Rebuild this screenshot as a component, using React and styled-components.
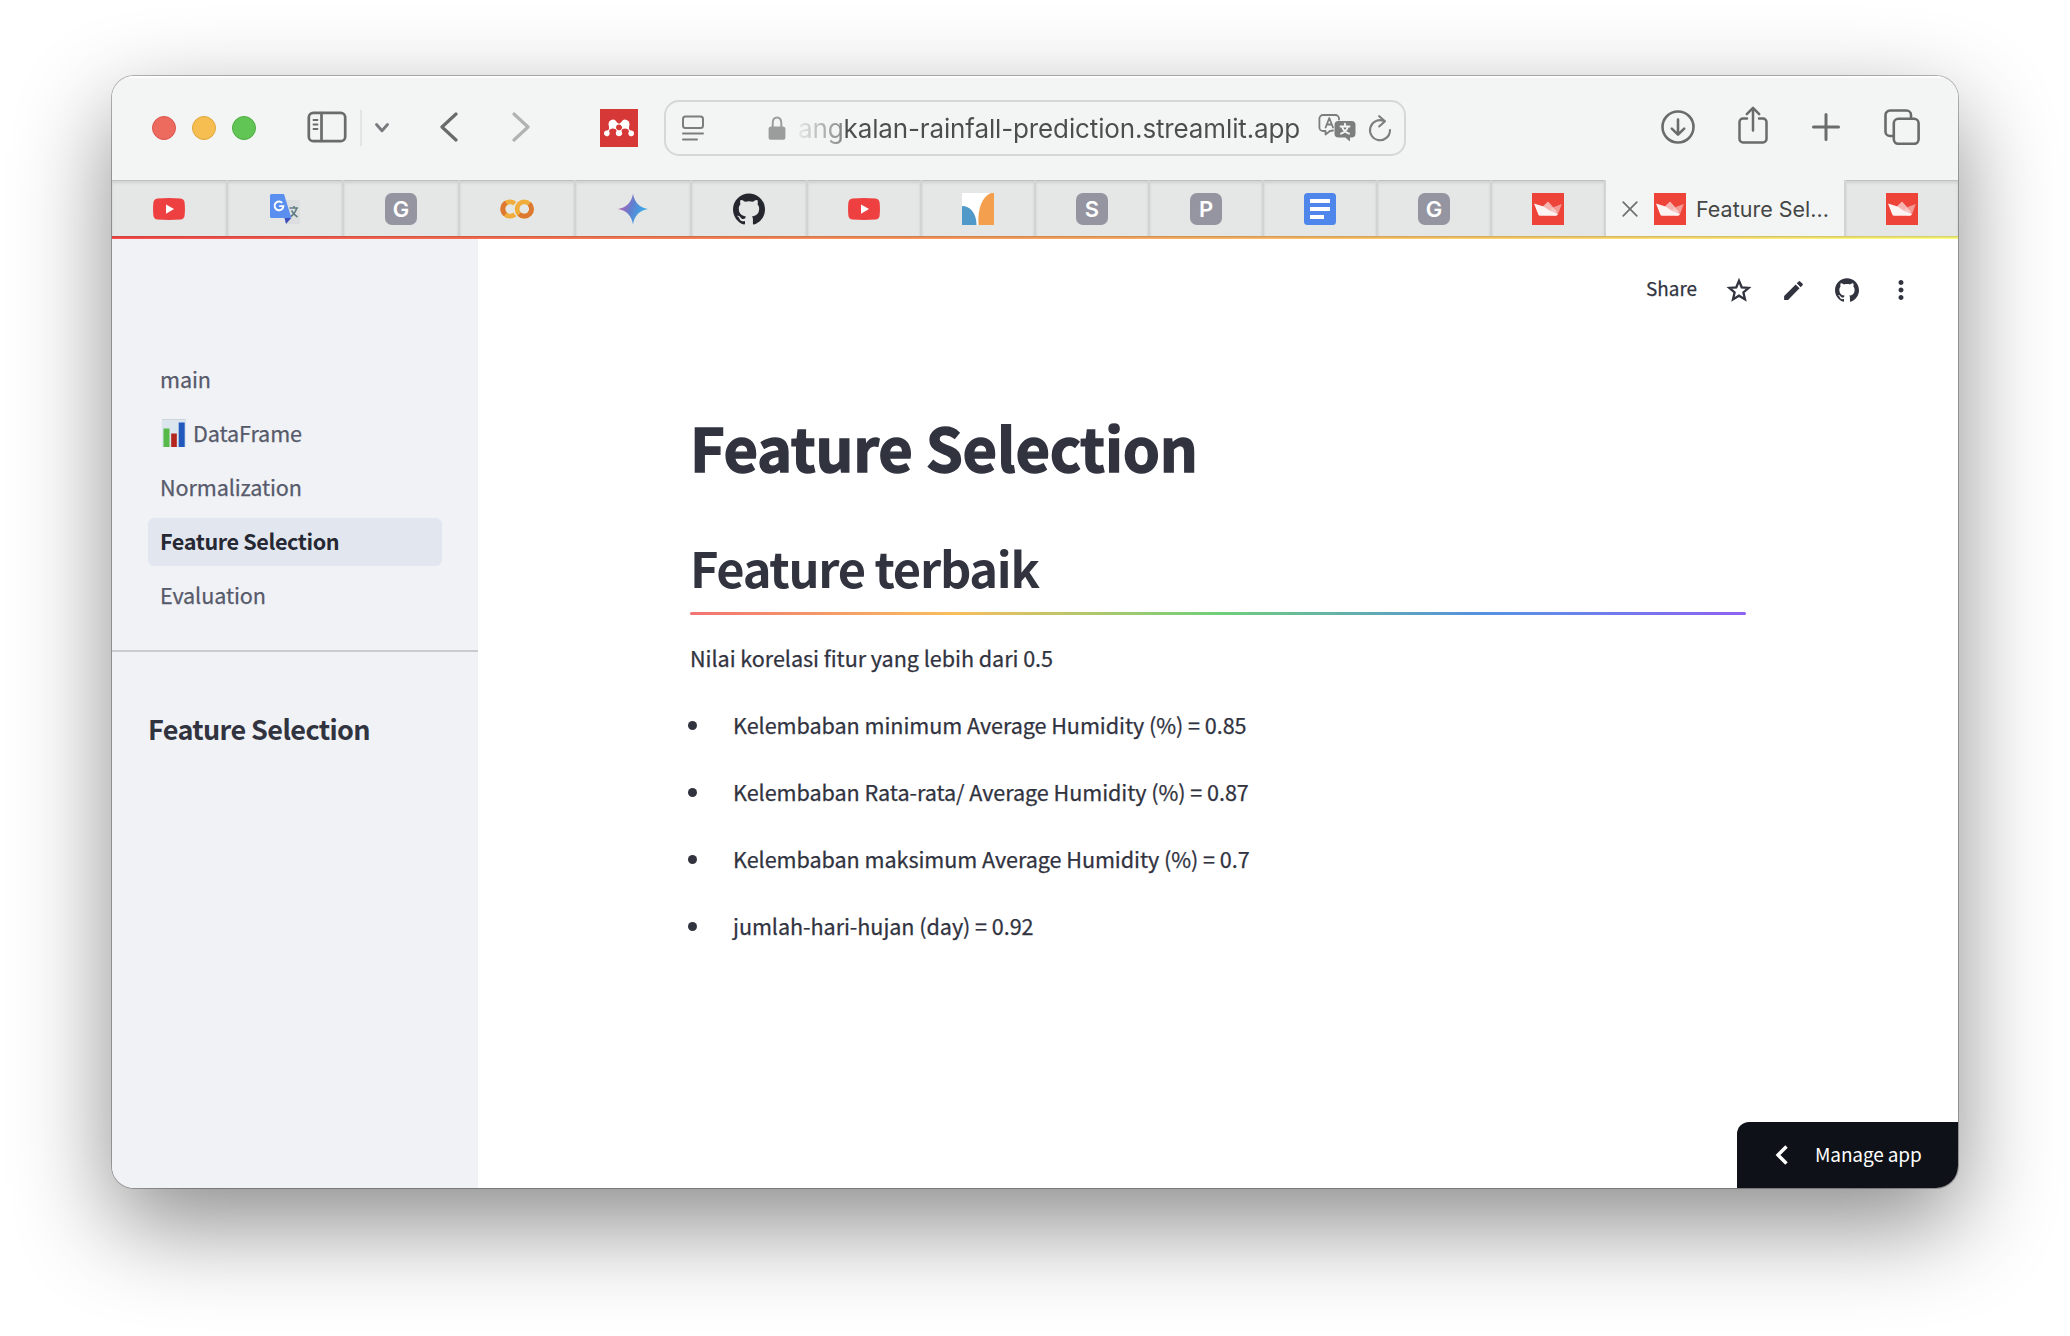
import React from "react";
import styled, { createGlobalStyle, css } from "styled-components";
import { SiGithub, SiMendeley } from "react-icons/si";
import { MdEdit, MdMoreVert } from "react-icons/md";

const PAGE_FONT = '"Noto Sans CJK SC", "Noto Sans", sans-serif';
const UI_FONT = 'Inter, "Liberation Sans", sans-serif';

const GlobalStyle = createGlobalStyle`
  *, *::before, *::after { box-sizing: border-box; }
  html, body { margin: 0; background: #fff; }
  svg { display: block; flex: none; }
`;

const Desktop = styled.div`
  width: 2070px;
  height: 1336px;
  padding: 76px 112px 148px;
  overflow: hidden;
  background: #fff;
`;

const Window = styled.div`
  height: 1112px;
  display: flex;
  flex-direction: column;
  border-radius: 22px;
  overflow: hidden;
  background: #fff;
  box-shadow: 0 0 0 1px rgba(0, 0, 0, 0.27), 0 36px 96px rgba(0, 0, 0, 0.46);
`;

const Toolbar = styled.header`
  height: 104px;
  flex: none;
  display: flex;
  align-items: center;
  background: #f3f5f4;
  color: #6a6b6b;
  box-shadow: inset 0 2px 1px rgba(255, 255, 255, 0.8);
`;

const Lights = styled.div`
  display: flex;
  gap: 16px;
  margin-left: 40px;
`;

const Light = styled.span`
  width: 24px;
  height: 24px;
  border-radius: 50%;
  background: ${(p) => p.$fill};
  border: 1px solid ${(p) => p.$edge};
`;

const ToolIcon = styled.span`
  display: flex;
  flex: none;
  margin-left: ${(p) => p.$gap}px;
  ${(p) => p.$lift && css`margin-bottom: ${p.$lift}px;`}
  color: ${(p) => p.$color || "inherit"};
`;

const Divider = styled.span`
  width: 2px;
  height: 36px;
  margin-left: 13px;
  background: #e3e5e4;
`;

const MendeleyBadge = styled.span`
  width: 38px;
  height: 38px;
  margin-left: 70px;
  display: flex;
  align-items: center;
  justify-content: center;
  background: #d63838;
  color: #fff;
`;

const AddressBar = styled.div`
  width: 742px;
  height: 56px;
  margin-left: 26px;
  padding: 0 12px 0 16px;
  display: flex;
  align-items: center;
  border: 2px solid #d6d8d7;
  border-radius: 15px;
  color: #7c7d7d;
`;

const Address = styled.span`
  width: 508px;
  margin-left: 12px;
  padding-top: 2px;
  white-space: nowrap;
  font: 400 26px/40px ${UI_FONT};
  letter-spacing: ${(p) => p.$track}px;
  color: transparent;
  background: linear-gradient(90deg, rgba(76, 77, 77, 0.08), rgba(76, 77, 77, 0.6) 42px, #4c4d4d 46px);
  background-clip: text;
  -webkit-background-clip: text;
`;

const TabStrip = styled.nav`
  height: 56px;
  flex: none;
  display: flex;
  background: #f3f5f4;
`;

const Tab = styled.div`
  width: ${(p) => p.$w}px;
  display: flex;
  align-items: center;
  justify-content: center;
  padding-top: 2px;
  background: #e5e7e6;
  border-right: 2px solid #d2d4d3;
  box-shadow: inset 0 1px 0 #bfc1c0, inset 0 3px 3px rgba(0, 0, 0, 0.09);
  &:last-child {
    border-right: 0;
    border-left: 2px solid #d2d4d3;
  }
`;

const ActiveTab = styled(Tab)`
  justify-content: flex-start;
  padding-left: 16px;
  background: #f3f5f4;
  border: 0;
  box-shadow: none;
`;

const TabTitle = styled.span`
  margin-left: 10px;
  font: 400 21.5px/30px ${UI_FONT};
  letter-spacing: ${(p) => p.$track}px;
  color: #454646;
  white-space: nowrap;
`;

const LetterBadge = styled.span`
  width: 32px;
  height: 32px;
  border-radius: 7px;
  background: #9595a2;
  color: #fff;
  font: 600 22px/33px ${UI_FONT};
  text-align: center;
`;

const AccentLine = styled.div`
  height: 3px;
  flex: none;
  background: linear-gradient(rgba(0, 0, 0, 0.16) 1px, transparent 2px),
    linear-gradient(90deg, #fa4b4b, #fba35f 50%, #fffd80);
`;

const Page = styled.div`
  flex: 1;
  display: flex;
  min-height: 0;
  font-family: ${PAGE_FONT};
  color: #31333f;
`;

const Sidebar = styled.aside`
  width: 366px;
  flex: none;
  background: #f0f2f6;
`;

const NavList = styled.ul`
  list-style: none;
  margin: 0;
  padding: 117px 36px 30px;
  display: flex;
  flex-direction: column;
  gap: 6px;
  border-bottom: 2px solid #cacbd1;
`;

const NavItem = styled.li`
  height: 48px;
  padding: 0 12px 2px;
  display: flex;
  align-items: center;
  border-radius: 6px;
  font-size: 21.6px;
  line-height: 46px;
  letter-spacing: ${(p) => (p.$active ? -0.38 : -0.1)}px;
  white-space: nowrap;
  color: ${(p) => (p.$active ? "#262834" : "#575a6b")};
  font-weight: ${(p) => (p.$active ? 700 : 400)};
  -webkit-text-stroke: ${(p) => (p.$active ? 0 : 0.25)}px currentColor;
  background: ${(p) => (p.$active ? "#e2e7ef" : "transparent")};
  svg { margin: 0 7px 0 2px; }
`;

const SidebarHeading = styled.h2`
  margin: 53px 0 0 36px;
  font-size: 27px;
  line-height: 48px;
  font-weight: 700;
  letter-spacing: ${(p) => p.$track}px;
  white-space: nowrap;
`;

const Main = styled.main`
  flex: 1;
  display: flex;
  flex-direction: column;
`;

const Actions = styled.div`
  height: 102px;
  padding: 0 45px 0 0;
  display: flex;
  align-items: center;
  justify-content: flex-end;
`;

const ShareLabel = styled.span`
  font-size: 18.9px;
  line-height: 30px;
  letter-spacing: ${(p) => p.$track}px;
  -webkit-text-stroke: 0.25px currentColor;
  margin: 0 28px 4px 0;
`;

const ActionIcon = styled.span`
  display: flex;
  margin-right: ${(p) => p.$after}px;
`;

const Content = styled.article`
  width: 1056px;
  margin: 60px 0 0 212px;
  white-space: nowrap;
`;

const Title = styled.h1`
  margin: 0;
  font-size: 59.5px;
  line-height: 90px;
  font-weight: 700;
  letter-spacing: ${(p) => p.$track}px;
  -webkit-text-stroke: 1.4px #31333f;
`;

const Subtitle = styled.h2`
  margin: 40px 0 0;
  font-size: 48.8px;
  line-height: 72px;
  font-weight: 700;
  letter-spacing: ${(p) => p.$track}px;
`;

const Rainbow = styled.div`
  height: 3px;
  margin-top: 9px;
  border-radius: 2px;
  background: linear-gradient(90deg, #f27373, #f8be5c 25%, #6fcf79 50%, #5590e0 75%, #5b8fe8 78%, #8d63f0 99%);
`;

const Paragraph = styled.p`
  margin: 24px 0 0;
  font-size: 21.6px;
  line-height: 38px;
  letter-spacing: ${(p) => p.$track}px;
  -webkit-text-stroke: 0.25px currentColor;
`;

const Features = styled.ul`
  list-style: none;
  margin: 29px 0 0;
  padding: 0;
  display: flex;
  flex-direction: column;
  gap: 29px;
`;

const Feature = styled.li`
  display: flex;
  align-items: center;
  font-size: 21.6px;
  line-height: 38px;
  letter-spacing: ${(p) => p.$track}px;
  -webkit-text-stroke: 0.25px currentColor;
  &::before {
    content: "";
    width: 9px;
    height: 9px;
    margin: 1px 36px 0 -2px;
    border-radius: 50%;
    background: #31333f;
  }
`;

const ManageButton = styled.button`
  width: 221px;
  height: 66px;
  margin: auto 0 0 auto;
  padding: 0 0 0 38px;
  display: flex;
  align-items: center;
  border: 0;
  border-radius: 12px 0 0 0;
  background: #0e1117;
  color: #fff;
  font: 400 19px/32px ${PAGE_FONT};
  letter-spacing: ${(p) => p.$track}px;
  white-space: nowrap;
  span { margin: 0 0 2px 27px; }
`;

const stroke = (width) => ({
  fill: "none",
  stroke: "currentColor",
  strokeWidth: width,
  strokeLinecap: "round",
  strokeLinejoin: "round",
});

const SidebarIcon = () => (
  <svg width="40" height="32" viewBox="0 0 40 32" {...stroke(2.7)}>
    <rect x="1.8" y="1.8" width="36.4" height="28.4" rx="4.5" />
    <path d="M14.5 2v28" />
    <path d="M6.5 9h4M6.5 13.5h4M6.5 18h4" strokeWidth="1.9" />
  </svg>
);

const ChevronDown = () => (
  <svg width="16" height="12" viewBox="0 0 16 12" {...stroke(2.9)}>
    <path d="M2.5 2.5 8 8.8l5.5-6.3" />
  </svg>
);

const Arrow = ({ flip }) => (
  <svg width="18" height="30" viewBox="0 0 18 30" {...stroke(3.2)}>
    <path d={flip ? "M2 2l14 13L2 28" : "M16 2 2 15l14 13"} />
  </svg>
);

const ReaderIcon = () => (
  <svg width="22" height="26" viewBox="0 0 22 26" {...stroke(2)}>
    <rect x="1" y="1.4" width="20" height="11.6" rx="2.5" />
    <path d="M1 18.5h20M1 24.4h14" />
  </svg>
);

const LockIcon = () => (
  <svg width="18" height="24" viewBox="0 0 18 24">
    <path d="M4.7 11V7.2C4.7 3.6 6.4 1.5 9 1.5s4.3 2.1 4.3 5.7V11" fill="none" stroke="#9b9d9c" strokeWidth="2" />
    <rect x="0.6" y="10.4" width="16.8" height="13.4" rx="2.6" fill="#9b9d9c" />
  </svg>
);

const TranslateIcon = () => (
  <svg width="38" height="28" viewBox="0 0 38 28" fill="none" strokeLinecap="round" strokeLinejoin="round">
    <path
      d="M15 16.5 12 17 7.5 20.5V17H5a3.6 3.6 0 0 1-3.6-3.6V4.6A3.6 3.6 0 0 1 5 1h12.4A3.6 3.6 0 0 1 21 4.6v1"
      stroke="#7c7d7d"
      strokeWidth="1.8"
    />
    <path d="M7.6 13.5 11.3 4l3.7 9.5M8.8 10.5h5" stroke="#7c7d7d" strokeWidth="1.8" />
    <path d="M20.5 7h13a4 4 0 0 1 4 4v8.5a4 4 0 0 1-4 4H32v4l-4.7-4h-6.800a4 4 0 0 1-4-4V11a4 4 0 0 1 4-4z" fill="#7c7d7d" />
    <path d="M27 9.800v2M22.500 12.500h9M29.800 13c-1 3-3.300 5.200-6.800 6.700M24.200 13c1 3 3.300 5.200 6.800 6.700" stroke="#f3f5f4" strokeWidth="1.900" />
  </svg>
);

const ReloadIcon = () => (
  <svg width="24" height="27" viewBox="0 0 24 27" {...stroke(2.1)}>
    <path d="M16 6A10 10 0 1 0 22 15" />
    <path d="M11.2 1.200l5.800 5-5.800 5.300" />
  </svg>
);

const DownloadIcon = () => (
  <svg width="34" height="34" viewBox="0 0 34 34" {...stroke(2.6)}>
    <circle cx="17" cy="17" r="15.5" />
    <path d="M17 9.500v14.800M10.800 18.600l6.200 6 6.200-6" />
  </svg>
);

const ShareIcon = () => (
  <svg width="30" height="38" viewBox="0 0 30 38" {...stroke(2.5)}>
    <path d="M9 12.500H5a3.500 3.500 0 0 0-3.500 3.500v17A3.500 3.500 0 0 0 5 36.500h20a3.500 3.500 0 0 0 3.500-3.500V16a3.500 3.500 0 0 0-3.500-3.500h-4" />
    <path d="M15 24.500V2M8.800 8.200 15 1.800l6.200 6.400" />
  </svg>
);

const PlusIcon = () => (
  <svg width="28" height="28" viewBox="0 0 28 28" {...stroke(3)}>
    <path d="M14 1.500v25M1.500 14h25" />
  </svg>
);

const TabsIcon = () => (
  <svg width="36" height="36" viewBox="0 0 36 36" {...stroke(2.6)}>
    <rect x="9.8" y="9.8" width="24.8" height="25" rx="4.5" />
    <path d="M9.500 27H6a4.500 4.500 0 0 1-4.500-4.500V6A4.500 4.500 0 0 1 6 1.500h16.500A4.500 4.500 0 0 1 27 6v3.500" />
  </svg>
);

const YoutubeIcon = () => (
  <svg width="32" height="32" viewBox="0 0 32 32">
    <path d="M4.500 5.400Q16 4.600 27.500 5.400 31.200 5.800 31.600 9.500q.7 6.500 0 13-.4 3.700-4.100 4.100-11.500.8-23 0Q.8 26.200.4 22.500q-.7-6.500 0-13Q.8 5.800 4.500 5.400z" fill="#ee4040" />
    <path d="M13 11.500v9.200l8-4.600z" fill="#fff" />
  </svg>
);

const GoogleTranslateIcon = () => (
  <svg width="32" height="32" viewBox="0 0 32 32">
    <path d="M13 7h16.500q1.500 0 1.500 1.500v21q0 1.500-1.500 1.500H18z" fill="#dcdedf" />
    <path d="M20.500 15h8.500M25 13v2M27.500 15.500c-1 4-3.500 6.500-6.500 8.500M22.500 17.500c1.500 2.500 3.500 5 6 6.500" fill="none" stroke="#607d86" strokeWidth="1.6" />
    <path d="M15.500 25h6.800L17 31z" fill="#3d4fb8" />
    <path d="M2.500 1H15l7.300 24H2.500Q1 25 1 23.500v-21Q1 1 2.500 1z" fill="#5a8ff0" />
    <path d="M13.200 9.800a4.400 4.400 0 1 0 1.200 3.300h-4.200" fill="none" stroke="#fff" strokeWidth="1.9" />
  </svg>
);

const ColabIcon = () => (
  <svg width="34" height="32" viewBox="-0.5 0 34 32" fill="none" strokeWidth="4.8">
    <path d="M14.300 10.600A7.200 7.200 0 1 0 14.300 21.400" stroke="#f0ad3c" />
    <path d="M5.600 9.800A7.200 7.200 0 0 0 4.900 21.400" stroke="#dd7832" />
    <circle cx="23.8" cy="16" r="7.2" stroke="#f0ad3c" />
    <path d="M28.900 10.900A7.200 7.200 0 0 1 18.700 21.100" stroke="#dd7832" />
  </svg>
);

const GeminiIcon = () => (
  <svg width="32" height="32" viewBox="0 0 32 32">
    <defs>
      <linearGradient id="gem" x1="0" y1="0.3" x2="1" y2="0.7">
        <stop offset="0.15" stopColor="#a568b8" />
        <stop offset="0.45" stopColor="#5f80d0" />
        <stop offset="0.8" stopColor="#3fa5e6" />
      </linearGradient>
    </defs>
    <path d="M16 .5C17.200 9 22.500 14.800 31 16 22.500 17.200 17.200 23 16 31.500 14.800 23 9.500 17.200 1 16 9.500 14.800 14.800 9 16 .5z" fill="url(#gem)" />
  </svg>
);

const CurvesIcon = () => (
  <svg width="32" height="32" viewBox="0 0 32 32">
    <path d="M0 0h32v32H0z" fill="#fff" />
    <path d="M0 13C8 13 14.500 20 14.500 32H0z" fill="#5199c8" />
    <path d="M32 0H29C20 4 15.500 15 16.500 32H32z" fill="#f39f4d" />
  </svg>
);

const DocsIcon = () => (
  <svg width="32" height="32" viewBox="0 0 32 32">
    <rect width="32" height="32" rx="3.5" fill="#4f86ec" />
    <path d="M6 6h20v4H6zM6 14h20v4H6zM6 22h14v4H6z" fill="#fff" />
  </svg>
);

const CrownIcon = () => (
  <svg width="32" height="32" viewBox="0 0 32 32">
    <path d="M0 0h32v32H0z" fill="#ee4338" />
    <path d="M10.800 13.400 16 8.600l4.600 5 1.400 5-6 1z" fill="#f6b4b1" />
    <path d="M29.800 11 20.500 14.500 17 19l8.700 3z" fill="#f39993" />
    <path d="M17.500 19.500 20 14l4 3.500 1.300 4.500-4 .5z" fill="#f8c6c4" />
    <path d="M2 10.400 11.500 13.600 17.500 17.600 25.800 21.200 25.300 22q-.4.800-1.300.8H8q-1 0-1.500-.8z" fill="#fdf3f2" />
  </svg>
);

const CloseIcon = () => (
  <svg width="16" height="16" viewBox="0 0 16 16" {...stroke(1.7)}>
    <path d="M1.200 1.200l13.600 13.600M14.800 1.200 1.200 14.800" />
  </svg>
);

const StarIcon = () => (
  <svg width="28" height="28" viewBox="0 0 28 28" {...stroke(2.3)} strokeLinejoin="miter">
    <path d="M14 4.800l2.700 6.500 7 .6-5.300 4.600 1.600 6.900-6-3.700-6 3.700 1.600-6.900-5.300-4.600 7-.6z" />
  </svg>
);

const ChartIcon = () => (
  <svg width="24" height="28" viewBox="0 0 24 28">
    <rect width="24" height="28" fill="#dbe5ee" />
    <path d="M0 .5h24" stroke="#cdd5db" />
    <rect x="1.5" y="9.5" width="6" height="18.5" fill="#57b947" />
    <rect x="9.2" y="14.5" width="5.6" height="13.5" fill="#b3251d" />
    <rect x="16.7" y="3.5" width="6" height="24.5" fill="#2159bd" />
  </svg>
);

const ManageChevron = () => (
  <svg width="13" height="20" viewBox="0 0 13 20" fill="none" stroke="currentColor" strokeWidth="3.4">
    <path d="M11.500 1.500 3 10l8.500 8.500" />
  </svg>
);

const LEADING_TABS = [
  [116, <YoutubeIcon />],
  [116, <GoogleTranslateIcon />],
  [116, <LetterBadge>G</LetterBadge>],
  [116, <ColabIcon />],
  [116, <GeminiIcon />],
  [116, <SiGithub size={32} color="#24282e" />],
  [114, <YoutubeIcon />],
  [114, <CurvesIcon />],
  [114, <LetterBadge>S</LetterBadge>],
  [114, <LetterBadge>P</LetterBadge>],
  [114, <DocsIcon />],
  [114, <LetterBadge>G</LetterBadge>],
  [114, <CrownIcon />],
];

const NAV = [
  { label: "main" },
  { label: "DataFrame", icon: <ChartIcon /> },
  { label: "Normalization" },
  { label: "Feature Selection", active: true },
  { label: "Evaluation" },
];

const FEATURES = [
  "Kelembaban minimum Average Humidity (%) = 0.85",
  "Kelembaban Rata-rata/ Average Humidity (%) = 0.87",
  "Kelembaban maksimum Average Humidity (%) = 0.7",
  "jumlah-hari-hujan (day) = 0.92",
];

export default function App() {
  return (
    <Desktop>
      <GlobalStyle />
      <Window>
        <Toolbar>
          <Lights>
            <Light $fill="#ed6a5f" $edge="#d9554b" />
            <Light $fill="#f6be50" $edge="#dfa53c" />
            <Light $fill="#61c555" $edge="#4bae3e" />
          </Lights>
          <ToolIcon $gap={51} $lift={2}><SidebarIcon /></ToolIcon>
          <Divider />
          <ToolIcon $gap={12} $color="#7a7b7f"><ChevronDown /></ToolIcon>
          <ToolIcon $gap={50} $lift={2}><Arrow /></ToolIcon>
          <ToolIcon $gap={54} $lift={2} $color="#b1b3b2"><Arrow flip /></ToolIcon>
          <MendeleyBadge><SiMendeley size={30} /></MendeleyBadge>
          <AddressBar>
            <ReaderIcon />
            <ToolIcon $gap={64}><LockIcon /></ToolIcon>
            <Address $track={-0.13}>angkalan-rainfall-prediction.streamlit.app</Address>
            <ToolIcon $gap={14}><TranslateIcon /></ToolIcon>
            <ToolIcon $gap={12}><ReloadIcon /></ToolIcon>
          </AddressBar>
          <ToolIcon $gap={255} $lift={2}><DownloadIcon /></ToolIcon>
          <ToolIcon $gap={43} $lift={6}><ShareIcon /></ToolIcon>
          <ToolIcon $gap={44} $lift={3}><PlusIcon /></ToolIcon>
          <ToolIcon $gap={44} $lift={3}><TabsIcon /></ToolIcon>
        </Toolbar>
        <TabStrip>
          {LEADING_TABS.map(([width, icon], i) => (
            <Tab key={i} $w={width}>{icon}</Tab>
          ))}
          <ActiveTab $w={238}>
            <ToolIcon $gap={0} $color="#6f7070"><CloseIcon /></ToolIcon>
            <ToolIcon $gap={16}><CrownIcon /></ToolIcon>
            <TabTitle $track={0}>Feature Sel...</TabTitle>
          </ActiveTab>
          <Tab $w={114}><CrownIcon /></Tab>
        </TabStrip>
        <AccentLine />
        <Page>
          <Sidebar>
            <NavList>
              {NAV.map(({ label, icon, active }) => (
                <NavItem key={label} $active={active}>{icon}<span>{label}</span></NavItem>
              ))}
            </NavList>
            <SidebarHeading $track={-0.6}>Feature Selection</SidebarHeading>
          </Sidebar>
          <Main>
            <Actions>
              <ShareLabel $track={0}>Share</ShareLabel>
              <ActionIcon $after={28}><StarIcon /></ActionIcon>
              <ActionIcon $after={29}><MdEdit size={25} /></ActionIcon>
              <ActionIcon $after={27}><SiGithub size={24} /></ActionIcon>
              <ActionIcon $after={-3}><MdMoreVert size={30} /></ActionIcon>
            </Actions>
            <Content>
              <Title $track={-0.25}>Feature Selection</Title>
              <Subtitle $track={-1.3}>Feature terbaik</Subtitle>
              <Rainbow />
              <Paragraph $track={-0.05}>Nilai korelasi fitur yang lebih dari 0.5</Paragraph>
              <Features>
                {FEATURES.map((text) => (
                  <Feature key={text} $track={-0.06}>{text}</Feature>
                ))}
              </Features>
            </Content>
            <ManageButton $track={-0.12}>
              <ManageChevron />
              <span>Manage app</span>
            </ManageButton>
          </Main>
        </Page>
      </Window>
    </Desktop>
  );
}
